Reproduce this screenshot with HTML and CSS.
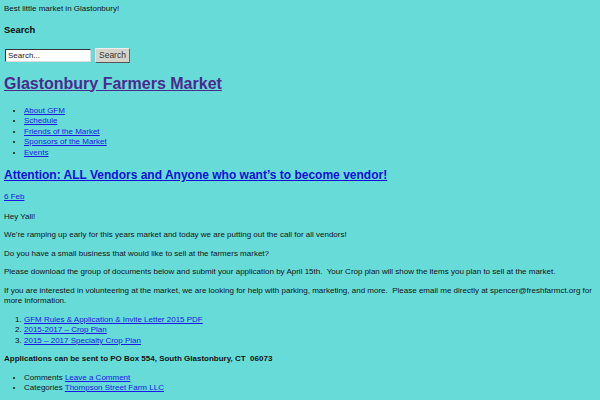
FILE: index.html
```html
<!DOCTYPE html>
<html>
<head>
<meta charset="utf-8">
<link rel="stylesheet" href="styles.css">
</head>
<body>
<div class="tagline">Best little market in Glastonbury!</div>
<h3 class="widget-title">Search</h3>
<form class="search-form">
  <input class="search-input" type="text" value="Search...">
  <button class="search-btn" type="button">Search</button>
</form>
<h1 class="site-title"><a href="#">Glastonbury Farmers Market</a></h1>
<ul class="nav">
  <li><a href="#">About GFM</a></li>
  <li><a href="#">Schedule</a></li>
  <li><a href="#">Friends of the Market</a></li>
  <li><a href="#">Sponsors of the Market</a></li>
  <li><a href="#">Events</a></li>
</ul>
<h2 class="post-title"><a href="#">Attention: ALL Vendors and Anyone who want’s to become vendor!</a></h2>
<p class="date"><a href="#">6 Feb</a></p>
<p>Hey Yall!</p>
<p>We’re ramping up early for this years market and today we are putting out the call for all vendors!</p>
<p>Do you have a small business that would like to sell at the farmers market?</p>
<p>Please download the group of documents below and submit your application by April 15th.&nbsp; Your Crop plan will show the items you plan to sell at the market.</p>
<p>If you are interested in volunteering at the market, we are looking for help with parking, marketing, and more.&nbsp; Please email me directly at spencer@freshfarmct.org for more information.</p>
<ol class="docs">
  <li><a href="#">GFM Rules &amp; Application &amp; Invite Letter 2015 PDF</a></li>
  <li><a href="#">2015-2017 – Crop Plan</a></li>
  <li><a href="#">2015 – 2017 Specialty Crop Plan</a></li>
</ol>
<p><strong>Applications can be sent to PO Box 554, South Glastonbury, CT&nbsp; 06073</strong></p>
<ul class="meta">
  <li>Comments <a href="#">Leave a Comment</a></li>
  <li>Categories <a href="#">Thompson Street Farm LLC</a></li>
</ul>
</body>
</html>
```

FILE: styles.css
```css
html {
  background: #66dbd8;
}
body {
  margin: 4px;
  font-family: "Liberation Sans", Arial, sans-serif;
  font-size: 8px;
  line-height: 10.5px;
  color: #141414;
}
a {
  color: #1a1ae6;
}
.tagline {
  margin: 0;
}
.widget-title {
  font-size: 9.4px;
  line-height: 11px;
  margin: 9px 0;
  color: #0a0a0a;
}
.search-form {
  display: flex;
  align-items: center;
  gap: 4px;
  margin: 0 0 0 1px;
  padding-top: 4px;
}
.search-input {
  width: 80px;
  height: 9px;
  padding: 1px 2px;
  font-family: "Liberation Sans", Arial, sans-serif;
  font-size: 8px;
  color: #222;
  background: #fff;
  border: 1px solid;
  border-color: #333 #ddd #ddd #333;
  outline: none;
}
.search-btn {
  height: 15px;
  padding: 0 3px;
  font-family: "Liberation Sans", Arial, sans-serif;
  font-size: 8.5px;
  color: #333;
  background: #d6d3cb;
  border: 1px solid;
  border-color: #eee #666 #555 #eee;
}
.site-title {
  font-size: 16px;
  line-height: 18px;
  margin: 12px 0 13px;
}
.site-title a {
  color: #4b2a8c;
}
.nav, .docs, .meta {
  margin: 8px 0;
  padding-left: 20px;
}
.post-title {
  font-size: 12px;
  line-height: 14px;
  margin: 10px 0;
}
.post-title a {
  color: #1010d8;
}
p {
  margin: 8px 0;
}
.date {
  margin-bottom: 9px;
}
```
